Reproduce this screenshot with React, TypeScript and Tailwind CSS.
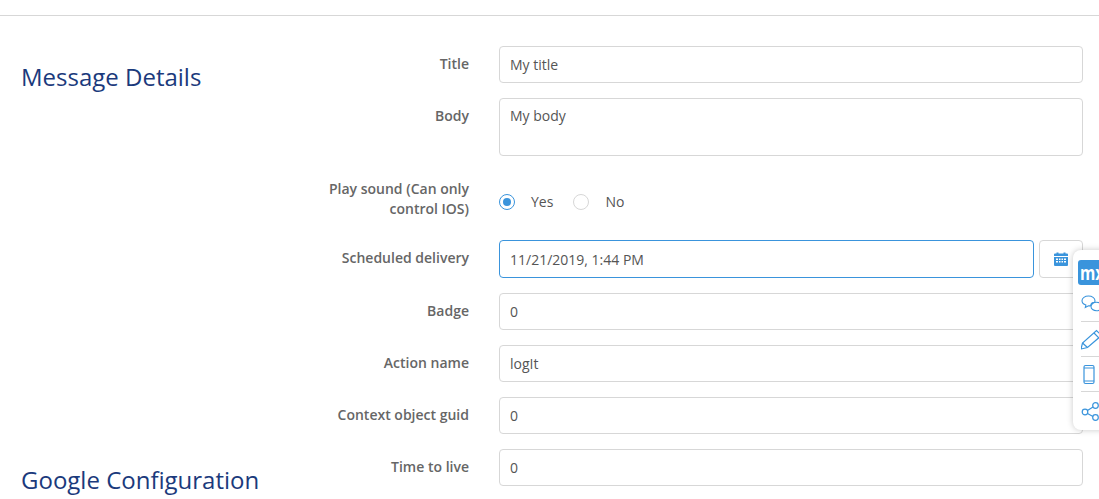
import React from 'react';

const inputCls = "h-[37px] w-full rounded-[4px] border border-[#d7d7d7] bg-white px-[10px] text-[14px] text-[#555] outline-none";

function Row({ label, children, className = "" }: { label: React.ReactNode; children: React.ReactNode; className?: string }) {
    return (
        <div className={`flex ${className}`}>
            <label className="w-[169px] shrink-0 pt-[8px] text-right text-[14px] leading-[20px] font-semibold text-[#666]">{label}</label>
            <div className="ml-[30px] min-w-0 flex-1">{children}</div>
        </div>
    );
}

function Radio({ checked, label }: { checked?: boolean; label: string }) {
    return (
        <div className="flex items-center">
            <span className={`flex h-[16px] w-[16px] items-center justify-center rounded-full border bg-white ${checked ? "border-[#3a94dc]" : "border-[#d7d7d7]"}`}>
                {checked && <span className="h-[8px] w-[8px] rounded-full bg-[#3a94dc]" />}
            </span>
            <span className="ml-[16px] text-[14px] text-[#555]">{label}</span>
        </div>
    );
}

function SideBar() {
    return (
        <div className="absolute top-[250px] left-[1073px] h-[180px] w-[40px] rounded-l-[8px] bg-white pt-[10px] shadow-[0_0_6px_rgba(0,0,0,0.22)]">
            <div className="ml-[5px] flex h-[25px] w-[30px] items-center overflow-hidden rounded-[3px] bg-[#3a94dc] pl-[2px]">
                <span className="origin-left scale-x-[0.78] text-[20px] leading-none font-bold text-white">mx</span>
            </div>
            <div className="ml-[8px] flex h-[37px] items-center border-b border-[#d7d7d7]">
                <svg width="24" height="24" viewBox="1.500 0 24 24" fill="none" stroke="#3a94dc" strokeWidth="1.1" className="mt-[3px]">
                    <path d="M9 3c3.600 0 6.500 2 6.500 4.700 0 .6-.1 1-.4 1.500-2.300.1-3.800 1.600-3.900 3.500-.7.200-1.400.200-2.200.100L5.800 14.500l.6-2.500C4 11.200 2.500 9.600 2.500 7.700 2.500 5 5.400 3 9 3z" />
                    <ellipse cx="17" cy="13.500" rx="5.500" ry="4.300" />
                    <path d="M19.500 17.300l2 2-.3-2.800" />
                </svg>
            </div>
            <div className="ml-[8px] flex h-[35px] items-center border-b border-[#d7d7d7]">
                <svg width="24" height="24" viewBox="2 0 24 24" fill="none" stroke="#3a94dc" strokeWidth="1.2" className="mt-[2px]">
                    <path d="M2 21l1.500-6L17.500 2.500l5 5L8.500 19.500 2 21z" />
                    <path d="M3.500 15l5 4.500M15 5l5 5" />
                </svg>
            </div>
            <div className="ml-[8px] flex h-[35px] items-center border-b border-[#d7d7d7]">
                <svg width="24" height="24" viewBox="3.500 0 24 24" fill="none" stroke="#3a94dc" strokeWidth="1.2" className="mt-[1px]">
                    <rect x="6.500" y="2.500" width="10" height="18" rx="1.500" />
                    <path d="M6.500 5h10M6.500 18h10" />
                </svg>
            </div>
            <div className="ml-[8px] flex h-[37px] items-center">
                <svg width="24" height="24" viewBox="1 0 24 24" fill="none" stroke="#3a94dc" strokeWidth="1.2">
                    <circle cx="5" cy="13" r="2.800" />
                    <circle cx="15.500" cy="6.500" r="2.800" />
                    <circle cx="15.500" cy="18.500" r="2.800" />
                    <path d="M7.500 11.500l5.500-3.500M7.500 14.500l5.500 3" />
                </svg>
            </div>
        </div>
    );
}

export default function App() {
    return (
        <div className="relative h-[499px] w-[1099px] overflow-hidden bg-white font-['Open_Sans',sans-serif]">
            <div className="h-[16px] border-b border-[#d7d7d7]" />
            <div className="flex">
                <div className="w-[300px] shrink-0 pl-[21px]">
                    <h2 className="mt-[43px] text-[24px] leading-[36px] font-normal text-[#1b3a7c]">Message Details</h2>
                    <h2 className="mt-[367px] text-[24px] leading-[36px] font-normal text-[#1b3a7c]">Google Configuration</h2>
                </div>
                <div className="w-[783px] shrink-0 pt-[30px]">
                    <Row label="Title" className="mb-[15px]">
                        <input className={inputCls} readOnly value="My title" />
                    </Row>
                    <Row label="Body" className="mb-[15px]">
                        <textarea className="block h-[58px] w-full resize-none rounded-[4px] border border-[#d7d7d7] px-[10px] py-[7px] text-[14px] leading-[20px] text-[#555] outline-none" readOnly value="My body" />
                    </Row>
                    <Row label={<>Play sound (Can only control IOS)</>} className="mb-[15px]">
                        <div className="flex h-[54px] items-center gap-[20px] pt-[7px]">
                            <Radio checked label="Yes" />
                            <Radio label="No" />
                        </div>
                    </Row>
                    <Row label="Scheduled delivery" className="mb-[15px]">
                        <div className="flex gap-[5px]">
                            <input className="h-[38px] min-w-0 flex-1 rounded-[4px] border border-[#3a94dc] bg-white px-[10px] text-[14px] text-[#555] outline-none" readOnly value="11/21/2019, 1:44 PM" />
                            <button className="flex h-[38px] w-[44px] items-center justify-center rounded-[4px] border border-[#d7d7d7] bg-white pb-[1px]">
                                <svg width="14" height="14" viewBox="0 0 14 14" fill="#3a94dc">
                                    <path d="M0 2.500a1 1 0 0 1 1-1h1.500V.5h2v1h5v-1h2v1H13a1 1 0 0 1 1 1V4H0z" />
                                    <path fillRule="evenodd" d="M0 5h14v8a1 1 0 0 1-1 1H1a1 1 0 0 1-1-1zm2 1.500V8h2V6.500zm3 0V8h1.500V6.500zm2.500 0V8H9V6.500zm2.500 0V8h2V6.500zM2 9v1.500h2V9zm3 0v1.500h1.500V9zm2.500 0v1.500H9V9zM10 9v1.500h2V9z" />
                                </svg>
                            </button>
                        </div>
                    </Row>
                    <Row label="Badge" className="mb-[15px]">
                        <input className={inputCls} readOnly value="0" />
                    </Row>
                    <Row label="Action name" className="mb-[15px]">
                        <input className={inputCls} readOnly value="logIt" />
                    </Row>
                    <Row label="Context object guid" className="mb-[15px]">
                        <input className={inputCls} readOnly value="0" />
                    </Row>
                    <Row label="Time to live">
                        <input className={inputCls} readOnly value="0" />
                    </Row>
                </div>
            </div>
            <SideBar />
        </div>
    );
}
